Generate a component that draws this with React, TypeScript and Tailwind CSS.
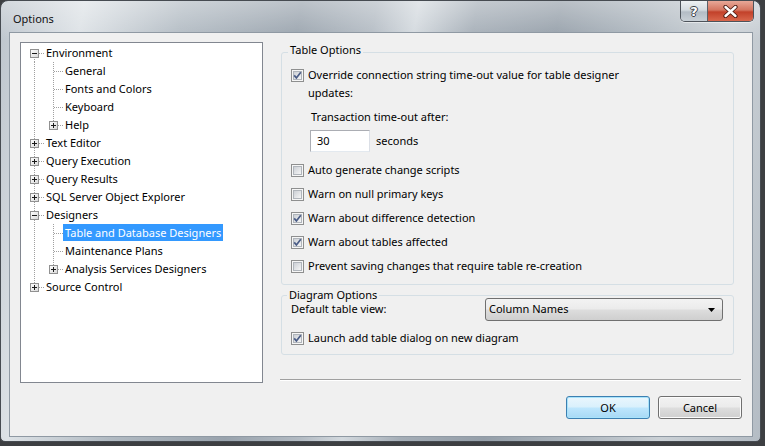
import React from 'react'

type TreeRow = {
  label: string
  level: number
  exp?: '+' | '-'
  first?: boolean
  last?: boolean
  selected?: boolean
}

const treeRows: TreeRow[] = [
  { label: 'Environment', level: 0, exp: '-', first: true },
  { label: 'General', level: 1 },
  { label: 'Fonts and Colors', level: 1 },
  { label: 'Keyboard', level: 1 },
  { label: 'Help', level: 1, exp: '+', last: true },
  { label: 'Text Editor', level: 0, exp: '+' },
  { label: 'Query Execution', level: 0, exp: '+' },
  { label: 'Query Results', level: 0, exp: '+' },
  { label: 'SQL Server Object Explorer', level: 0, exp: '+' },
  { label: 'Designers', level: 0, exp: '-' },
  { label: 'Table and Database Designers', level: 1, selected: true },
  { label: 'Maintenance Plans', level: 1 },
  { label: 'Analysis Services Designers', level: 1, exp: '+', last: true },
  { label: 'Source Control', level: 0, exp: '+', last: true },
]

const TreeCell = ({
  up,
  down,
  branch,
  exp,
}: {
  up?: boolean
  down?: boolean
  branch?: boolean
  exp?: '+' | '-'
}) => (
  <svg width="19" height="18" className="shrink-0" shapeRendering="crispEdges">
    {(up || down) && (
      <line x1="9.5" x2="9.5" y1={up ? 0 : 9} y2={down ? 18 : 9} stroke="#a0a0a0" strokeDasharray="1 1" />
    )}
    {branch && <line x1="10" x2="19" y1="9.5" y2="9.5" stroke="#a0a0a0" strokeDasharray="1 1" />}
    {exp && (
      <g>
        <rect x="5.5" y="5.5" width="8" height="8" fill="url(#expg)" stroke="#919191" />
        <line x1="7" x2="12" y1="9.5" y2="9.5" stroke="#1a1a1a" />
        {exp === '+' && <line x1="9.5" x2="9.5" y1="7" y2="12" stroke="#1a1a1a" />}
      </g>
    )}
  </svg>
)

const Tree = () => (
  <div className="w-[243px] h-[341px] shrink-0 bg-white border border-[#828790] pt-[1px] pl-[4px]">
    {treeRows.map(row => (
      <div key={row.label} className="flex h-[18px] items-start">
        {row.level === 1 && <TreeCell up down />}
        <TreeCell up={!row.first} down={!row.last} branch exp={row.exp} />
        <span
          className={
            row.selected
              ? 'h-[17px] leading-[17px] px-[2px] bg-[#3399ff] text-white whitespace-nowrap'
              : 'h-[17px] leading-[17px] px-[2px] text-black whitespace-nowrap'
          }
        >
          {row.label}
        </span>
      </div>
    ))}
  </div>
)

const CheckBox = ({ checked }: { checked?: boolean }) => (
  <svg width="13" height="13" viewBox="0 0 13 13" className="shrink-0" shapeRendering="crispEdges">
    <rect x="0.5" y="0.5" width="12" height="12" fill="#f6f6f6" stroke="#8e8f8f" />
    <rect x="2.5" y="2.5" width="8" height="8" fill="url(#cbg)" stroke="#b0b5bb" />
    {checked && (
      <path
        d="M3.2 6.4 L5.4 8.9 L9.8 3.2"
        fill="none"
        stroke="#4a5c86"
        strokeWidth="1.7"
        shapeRendering="geometricPrecision"
      />
    )}
  </svg>
)

const CheckRow = ({ label, checked, className }: { label: string; checked?: boolean; className?: string }) => (
  <div className={`flex items-center gap-[4px] h-[18px] leading-[18px] ${className ?? ''}`}>
    <CheckBox checked={checked} />
    <span>{label}</span>
  </div>
)

const GroupLabel = ({ text, className }: { text: string; className: string }) => (
  <span className={`absolute px-[2px] bg-[#f0f0f0] leading-[16px] ${className}`}>{text}</span>
)

const CaptionButtons = () => (
  <div className="flex ml-auto mr-[6px] h-[21px] rounded-b-[5px] border border-t-0 border-[#4d535a] overflow-hidden shadow-[0_1px_0_rgba(255,255,255,0.5)]">
    <div className="w-[27px] h-full flex items-center justify-center border-r border-[#5a6068] bg-[linear-gradient(to_bottom,#eef1f3_0%,#d4dbe0_45%,#b3bcc5_55%,#c8d0d6_100%)]">
      <span className="font-['DejaVu_Sans',sans-serif] text-white font-bold text-[13px] leading-none [text-shadow:1px_0_0_#3a4047,-1px_0_0_#3a4047,0_1px_0_#3a4047,0_-1px_0_#3a4047]">
        ?
      </span>
    </div>
    <div className="w-[45px] h-full flex items-center justify-center bg-[linear-gradient(to_bottom,#e8a898_0%,#d47560_45%,#c2412a_55%,#d9674c_100%)]">
      <svg width="15" height="13" viewBox="0 0 15 13">
        <path d="M2.5 2 L12.5 11 M12.5 2 L2.5 11" stroke="#4a1a12" strokeWidth="4.2" strokeLinecap="round" />
        <path d="M2.5 2 L12.5 11 M12.5 2 L2.5 11" stroke="#ffffff" strokeWidth="2.4" strokeLinecap="round" />
      </svg>
    </div>
  </div>
)

export default function App() {
  return (
    <div className="w-[765px] h-[446px] bg-[#3d3f42] overflow-hidden font-['Noto_Sans',sans-serif] text-[11px] text-black">
      <svg width="0" height="0" className="absolute">
        <defs>
          <linearGradient id="cbg" x1="0" y1="0" x2="1" y2="1">
            <stop offset="0" stopColor="#c9cdd3" />
            <stop offset="1" stopColor="#f8f8f8" />
          </linearGradient>
          <linearGradient id="expg" x1="0" y1="0" x2="1" y2="1">
            <stop offset="0" stopColor="#ffffff" />
            <stop offset="1" stopColor="#d8d8d8" />
          </linearGradient>
        </defs>
      </svg>

      <div className="w-[761px] h-[442px] flex flex-col rounded-t-[8px] rounded-b-[5px] border border-[#464b51] bg-[linear-gradient(to_bottom,rgba(255,255,255,0.35),rgba(255,255,255,0)_40px),linear-gradient(100deg,#bcc4cc_0%,#dde2e6_10%,#b2bbc3_22%,#99a3ad_36%,#b3bbc3_45%,#d3d9de_50%,#a5aeb7_57%,#959fa9_67%,#adb6be_77%,#cbd1d6_88%,#b4bcc4_100%)]">
        {/* title bar */}
        <div className="h-[31px] shrink-0 flex items-start">
          <span className="pl-[12px] pt-[10px] leading-[16px] text-[#111]">Options</span>
          <CaptionButtons />
        </div>

        {/* client area */}
        <div className="ml-[8px] mr-[7px] h-[405px] shrink-0 bg-[#f0f0f0] border border-[#8f99a3] pt-[9px] pl-[10px] flex">
          <Tree />

          <div className="ml-[17px] w-[462px] flex flex-col">
            {/* Table Options */}
            <div className="relative mt-[10px] ml-[1px] w-[453px] border border-[#d5dfe5] rounded-[3px] pt-[13px] pb-[9px] pl-[9px]">
              <GroupLabel text="Table Options" className="left-[6px] -top-[11px]" />

              <div className="flex items-start gap-[4px]">
                <div className="mt-[3px]">
                  <CheckBox checked />
                </div>
                <div className="leading-[18px]">
                  <div>Override connection string time-out value for table designer</div>
                  <div>updates:</div>
                </div>
              </div>

              <div className="mt-[6px] ml-[20px] leading-[18px]">Transaction time-out after:</div>
              <div className="mt-[4px] ml-[19px] flex items-center">
                <div className="w-[60px] h-[22px] bg-white border border-[#abadb3] border-r-[#dbdfe6] border-b-[#e3e9ef] pl-[6px] leading-[20px]">
                  30
                </div>
                <span className="ml-[6px]">seconds</span>
              </div>

              <CheckRow className="mt-[9px]" label="Auto generate change scripts" />
              <CheckRow className="mt-[6px]" label="Warn on null primary keys" />
              <CheckRow className="mt-[6px]" label="Warn about difference detection" checked />
              <CheckRow className="mt-[6px]" label="Warn about tables affected" checked />
              <CheckRow className="mt-[6px]" label="Prevent saving changes that require table re-creation" />
            </div>

            {/* Diagram Options */}
            <div className="relative mt-[10px] ml-[1px] w-[453px] border border-[#d5dfe5] rounded-[3px] pt-[2px] pb-[7px] pl-[9px]">
              <GroupLabel text="Diagram Options" className="left-[5px] -top-[9px]" />

              <div className="flex items-center h-[23px]">
                <span className="w-[194px]">Default table view:</span>
                <div className="w-[238px] h-[23px] flex items-center justify-between rounded-[3px] border border-[#707070] pl-[3px] pr-[7px] bg-[linear-gradient(to_bottom,#f3f3f3_0%,#ebebeb_48%,#dddddd_52%,#cfcfcf_100%)]">
                  <span>Column Names</span>
                  <svg width="7" height="4" viewBox="0 0 7 4">
                    <path d="M0 0 H7 L3.5 4 Z" fill="#000" />
                  </svg>
                </div>
              </div>

              <CheckRow className="mt-[8px]" label="Launch add table dialog on new diagram" checked />
            </div>

            {/* separator */}
            <div className="mt-[24px] mr-[1px] border-t border-[#a0a0a0] border-b border-b-white" />

            {/* buttons */}
            <div className="mt-[15px] flex justify-end gap-[8px]">
              <button className="w-[84px] h-[23px] rounded-[3px] border border-[#3c7fb1] shadow-[inset_0_0_0_1px_#a8e3fb] bg-[linear-gradient(to_bottom,#eaf6fd_0%,#d9f0fc_48%,#bee6fd_52%,#a7d9f5_100%)] leading-[21px]">
                OK
              </button>
              <button className="w-[84px] h-[23px] rounded-[3px] border border-[#707070] shadow-[inset_0_0_0_1px_#fcfcfc] bg-[linear-gradient(to_bottom,#f2f2f2_0%,#ebebeb_48%,#dddddd_52%,#cfcfcf_100%)] leading-[21px]">
                Cancel
              </button>
            </div>
          </div>
        </div>
      </div>
    </div>
  )
}
